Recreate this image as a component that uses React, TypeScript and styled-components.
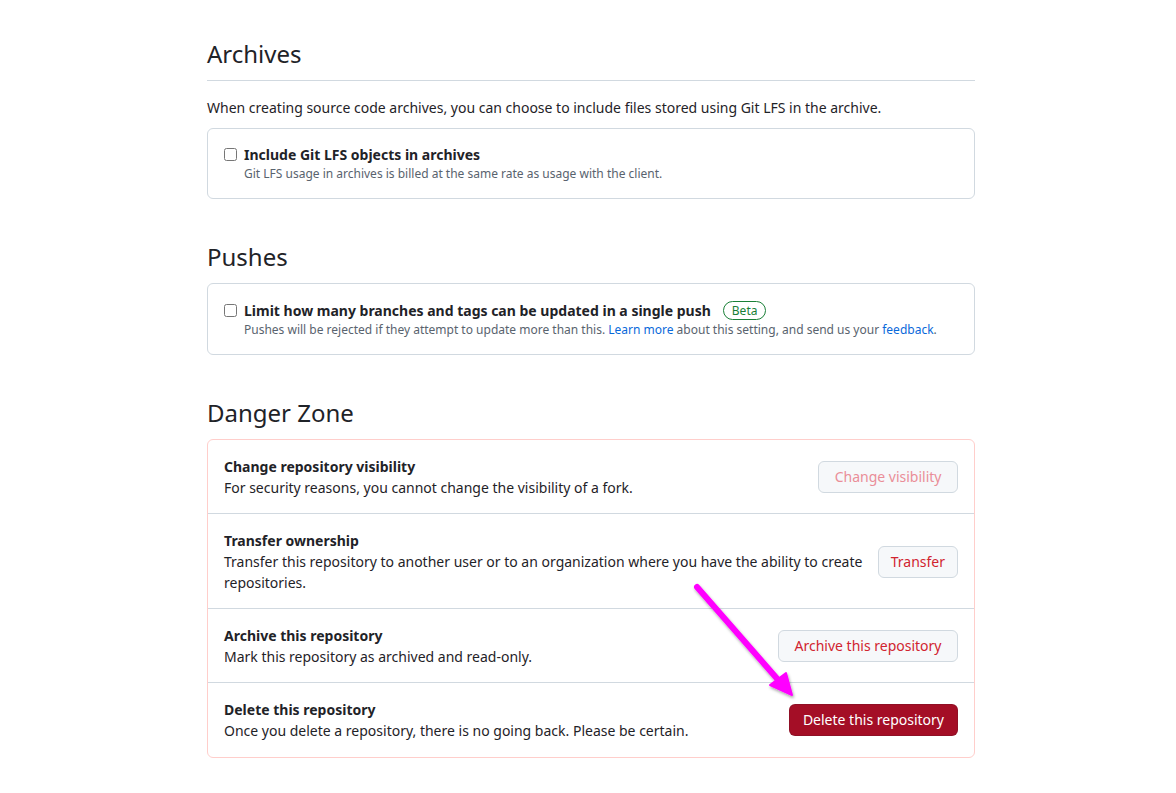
import React from "react";
import styled, { createGlobalStyle } from "styled-components";

const Global = createGlobalStyle`
  html, body { margin: 0; padding: 0; background: #ffffff; }
  body {
    font-family: "Noto Sans", "Liberation Sans", sans-serif;
    font-size: 14px;
    line-height: 1.5;
    color: #1f2328;
  }
  * { box-sizing: border-box; }
`;

const Page = styled.div`
  position: relative;
  width: 1176px;
  min-height: 793px;
`;

const Column = styled.main`
  width: 768px;
  margin-left: 207px;
  padding-top: 36px;
  display: flex;
  flex-direction: column;
`;

const Heading = styled.h2<{ $underline?: boolean; $first?: boolean }>`
  margin: ${(p) => (p.$first ? "0" : "40px")} 0 ${(p) => (p.$underline ? "16px" : "8px")} 0;
  padding-bottom: ${(p) => (p.$underline ? "8px" : "0")};
  border-bottom: ${(p) => (p.$underline ? "1px solid #d1d9e0" : "none")};
  font-size: 24px;
  font-weight: 400;
  line-height: 36px;
  color: #1f2328;
`;

const Lead = styled.p`
  margin: 0 0 10px 0;
  font-size: 14px;
  line-height: 21px;
`;

const Box = styled.div<{ $danger?: boolean }>`
  border: 1px solid ${(p) => (p.$danger ? "#ffcecb" : "#d1d9e0")};
  border-radius: 6px;
  background: #fff;
`;

const CheckRow = styled.label<{ $padTop?: number }>`
  display: flex;
  align-items: flex-start;
  gap: 7px;
  padding: ${(p) => p.$padTop ?? 15}px 16px 15px 16px;
`;

const Check = styled.input.attrs({ type: "checkbox" })`
  width: 13px;
  height: 13px;
  margin: 4px 0 0 0;
  flex: none;
`;

const CheckText = styled.div`
  display: flex;
  flex-direction: column;
`;

const CheckTitle = styled.div`
  display: flex;
  align-items: center;
  gap: 12px;
  height: 21px;
  font-weight: 700;
  font-size: 14px;
  line-height: 21px;
`;

const Note = styled.div`
  font-size: 12px;
  line-height: 18px;
  color: #59636e;
`;

const Link = styled.a`
  color: #0969da;
  text-decoration: none;
`;

const Badge = styled.span`
  display: inline-flex;
  align-items: center;
  height: 19px;
  padding: 0 8px;
  border: 1px solid #1a7f37;
  border-radius: 2em;
  color: #1a7f37;
  font-size: 12px;
  font-weight: 400;
  line-height: 18px;
`;

const DangerRow = styled.div<{ $last?: boolean }>`
  display: flex;
  align-items: center;
  justify-content: space-between;
  gap: 8px;
  padding: 16px 16px ${(p) => (p.$last ? "16px" : "15px")} 16px;
  border-bottom: ${(p) => (p.$last ? "none" : "1px solid #d1d9e0")};
`;

const RowText = styled.div`
  display: flex;
  flex-direction: column;
  font-size: 14px;
  line-height: 21px;
`;

const RowTitle = styled.strong`
  font-weight: 700;
`;

const Button = styled.button<{ $variant?: "danger" | "solid" | "disabled"; $pad?: number }>`
  flex: none;
  height: 32px;
  padding: 0 ${(p) => p.$pad ?? 15.5}px;
  border-radius: 6px;
  font-family: inherit;
  font-size: 14px;
  line-height: 20px;
  white-space: nowrap;
  cursor: pointer;
  border: 1px solid
    ${(p) => (p.$variant === "solid" ? "rgba(31,35,40,0.15)" : "#d1d9e0")};
  background: ${(p) => (p.$variant === "solid" ? "#a40e26" : "#f6f8fa")};
  color: ${(p) =>
    p.$variant === "solid"
      ? "#ffffff"
      : p.$variant === "disabled"
      ? "#ea8e98"
      : "#d1242f"};
`;

const Arrow = styled.svg`
  position: absolute;
  left: 680px;
  top: 570px;
  overflow: visible;
  pointer-events: none;
`;

export default function App() {
  return (
    <Page>
      <Global />
      <Column>
        <Heading $underline $first>
          Archives
        </Heading>
        <Lead>
          When creating source code archives, you can choose to include files
          stored using Git LFS in the archive.
        </Lead>
        <Box>
          <CheckRow>
            <Check />
            <CheckText>
              <CheckTitle>Include Git LFS objects in archives</CheckTitle>
              <Note>
                Git LFS usage in archives is billed at the same rate as usage
                with the client.
              </Note>
            </CheckText>
          </CheckRow>
        </Box>

        <Heading>Pushes</Heading>
        <Box>
          <CheckRow $padTop={16}>
            <Check />
            <CheckText>
              <CheckTitle>
                Limit how many branches and tags can be updated in a single
                push
                <Badge>Beta</Badge>
              </CheckTitle>
              <Note>
                Pushes will be rejected if they attempt to update more than
                this. <Link href="#">Learn more</Link> about this setting, and
                send us your <Link href="#">feedback</Link>.
              </Note>
            </CheckText>
          </CheckRow>
        </Box>

        <Heading>Danger Zone</Heading>
        <Box $danger>
          <DangerRow>
            <RowText>
              <RowTitle>Change repository visibility</RowTitle>
              <span>For security reasons, you cannot change the visibility of a fork.</span>
            </RowText>
            <Button $variant="disabled">Change visibility</Button>
          </DangerRow>
          <DangerRow>
            <RowText>
              <RowTitle>Transfer ownership</RowTitle>
              <span>
                Transfer this repository to another user or to an organization
                where you have the ability to create repositories.
              </span>
            </RowText>
            <Button $variant="danger" $pad={12}>Transfer</Button>
          </DangerRow>
          <DangerRow>
            <RowText>
              <RowTitle>Archive this repository</RowTitle>
              <span>Mark this repository as archived and read-only.</span>
            </RowText>
            <Button $variant="danger">Archive this repository</Button>
          </DangerRow>
          <DangerRow $last>
            <RowText>
              <RowTitle>Delete this repository</RowTitle>
              <span>
                Once you delete a repository, there is no going back. Please be
                certain.
              </span>
            </RowText>
            <Button $variant="solid" $pad={13}>Delete this repository</Button>
          </DangerRow>
        </Box>
      </Column>

      <Arrow width="130" height="140" viewBox="0 0 130 140">
        <defs>
          <filter id="sh" x="-20%" y="-20%" width="140%" height="140%">
            <feDropShadow dx="1" dy="2" stdDeviation="1.5" floodColor="#000" floodOpacity="0.35" />
          </filter>
        </defs>
        <g filter="url(#sh)">
          <line x1="17" y1="17" x2="100" y2="112" stroke="#ff00ff" strokeWidth="6" strokeLinecap="round" />
          <polygon points="90,115 106,103 112,125" fill="#ff00ff" stroke="#ff00ff" strokeWidth="2" strokeLinejoin="round" />
        </g>
      </Arrow>
    </Page>
  );
}
